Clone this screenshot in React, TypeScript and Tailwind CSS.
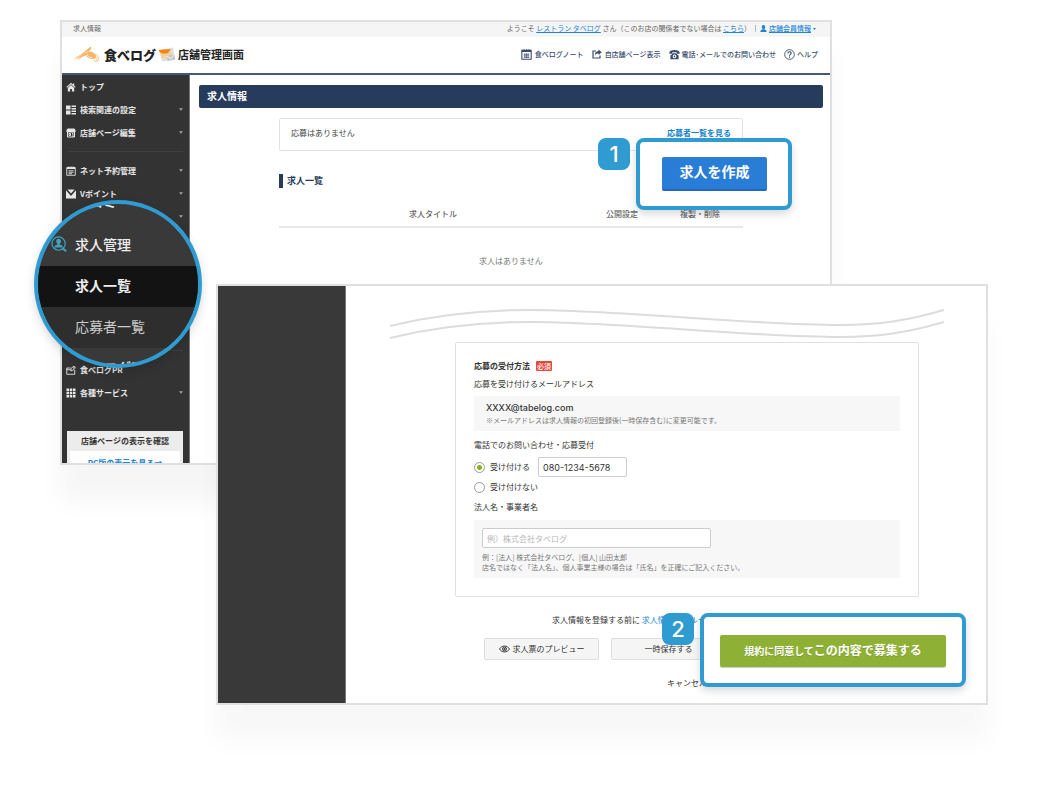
import type { ReactNode } from "react";

type IconProps = { className?: string };

// ---------- icons ----------

const HomeIcon = ({ className }: IconProps) => (
  <svg viewBox="0 0 20 20" className={className} fill="currentColor" aria-hidden="true">
    <path d="M10 1.5 0.8 9.8l1.5 1.7L10 4.6l7.7 6.9 1.5-1.7L16.5 7.3V3h-2.6v2z" />
    <path d="M10 6.2 3.6 12v6.8h4.6v-4.6h3.6v4.6h4.6V12z" />
  </svg>
);

const BlocksIcon = ({ className }: IconProps) => (
  <svg viewBox="0 0 20 20" className={className} fill="currentColor" aria-hidden="true">
    <path d="M0 1h9v8H0zM0 11h9v8H0zM11 1h9v3h-9zM11 6h9v3h-9zM11 11h9v3h-9zM11 16h9v3h-9z" />
  </svg>
);

const StoreIcon = ({ className }: IconProps) => (
  <svg viewBox="0 0 20 20" className={className} fill="none" stroke="currentColor" strokeWidth="2" aria-hidden="true">
    <path d="M3 2h14l1.5 5h-17z" fill="currentColor" />
    <path d="M3 8v10h14V8M2 8h16" />
    <path d="M6 11h3v4H6zM12 11h2v7" />
  </svg>
);

const CalendarIcon = ({ className }: IconProps) => (
  <svg viewBox="0 0 20 20" className={className} fill="none" stroke="currentColor" strokeWidth="1.8" aria-hidden="true">
    <path d="M1.5 3h17v15.5h-17z" />
    <path d="M2 5h16M5.5 1v4M10 1v4M14.5 1v4" strokeWidth="2.2" />
    <path d="M5 9.5h10M5 12.5h10M5 15.5h7" />
  </svg>
);

const PointIcon = ({ className }: IconProps) => (
  <svg viewBox="0 0 20 20" className={className} fill="currentColor" aria-hidden="true">
    <path d="M3 1h14l-7 8zM0 2.500l10 11.500L20 2.500V19H0z" />
  </svg>
);

const PrIcon = ({ className }: IconProps) => (
  <svg viewBox="0 0 20 20" className={className} fill="none" stroke="currentColor" strokeWidth="1.8" aria-hidden="true">
    <path d="M9 6H1.5v12.5h16V10M1.5 9.5h8" />
    <path d="M10 12V7l6-5v7zM18 3v4" />
  </svg>
);

const GridIcon = ({ className }: IconProps) => (
  <svg viewBox="0 0 20 20" className={className} fill="currentColor" aria-hidden="true">
    <path d="M1 1h5v5H1zM7.5 1h5v5h-5zM14 1h5v5h-5zM1 7.5h5v5H1zM7.5 7.5h5v5h-5zM14 7.5h5v5h-5zM1 14h5v5H1zM7.5 14h5v5h-5zM14 14h5v5h-5z" />
  </svg>
);

const ReviewIcon = ({ className }: IconProps) => (
  <svg viewBox="0 0 20 20" className={className} fill="none" stroke="currentColor" strokeWidth="2" aria-hidden="true">
    <path d="M2 16 13 4l4 4L6 18H2z" />
  </svg>
);

const NoteIcon = ({ className }: IconProps) => (
  <svg viewBox="0 0 20 20" className={className} fill="none" stroke="currentColor" strokeWidth="2" aria-hidden="true">
    <path d="M1.5 2.5h17v16h-17z" />
    <path d="M1.5 4.5h17M5.5 0.5v4M10 0.5v4M14.5 0.5v4" />
    <path d="M5 9.5h10M5 12.5h10M5 15.500h10M7 8v8M10 8v8M13 8v8" strokeWidth="1.2" />
  </svg>
);

const ShareIcon = ({ className }: IconProps) => (
  <svg viewBox="0 0 20 20" className={className} fill="none" stroke="currentColor" strokeWidth="2.400" aria-hidden="true">
    <path d="M8 4H2v14h14v-5" />
    <path d="M13 1l6.5 5.5L13 12V9c-4 0-6 1-7.500 4.500C5.500 7.500 8.500 4.500 13 4z" fill="currentColor" stroke="none" />
  </svg>
);

const TelIcon = ({ className }: IconProps) => (
  <svg viewBox="0 0 20 20" className={className} fill="currentColor" aria-hidden="true">
    <path d="M0.500 7.500C0.500 4 4 2 10 2s9.500 2 9.500 5.500v1h-5.200V6.300C12 5.700 8 5.700 5.700 6.300v2.200H0.500z" />
    <path fillRule="evenodd" d="M6.500 7.500h7l1 2.200 3 2.300v6.500h-15V12l3-2.300zM10 10.200a3.300 3.300 0 1 0 0 6.600 3.300 3.300 0 0 0 0-6.600zm0 1.800a1.500 1.500 0 1 1 0 3 1.500 1.500 0 0 1 0-3z" />
  </svg>
);

const HelpIcon = ({ className }: IconProps) => (
  <svg viewBox="0 0 20 20" className={className} fill="none" stroke="currentColor" strokeWidth="1.600" aria-hidden="true">
    <circle cx="10" cy="10" r="8.800" />
    <path d="M7 8c0-4 6-4 6-0.500 0 2-3 2.500-3 4.800M10 13.800v2" strokeWidth="2" />
  </svg>
);

const PersonIcon = ({ className }: IconProps) => (
  <svg viewBox="0 0 20 20" className={className} fill="currentColor" aria-hidden="true">
    <path d="M10 0c-3.500 0-5 2.500-5 5.500 0 2.800 1 4.500 2.500 5.500v2C4 13.600 1 14.500 1 20h18c0-5.500-3-6.400-6.500-7v-2C14 10 15 8.300 15 5.500 15 2.500 13.500 0 10 0z" />
  </svg>
);

const RecruitIcon = ({ className }: IconProps) => (
  <svg viewBox="0 0 20 20" className={className} fill="none" stroke="currentColor" aria-hidden="true">
    <circle cx="9.500" cy="9.500" r="8.300" strokeWidth="1.500" />
    <path d="m14.500 15.500 4.500 3.500" strokeWidth="2.500" />
    <path
      d="M9.500 3.500c-2 0-3 1.400-3 3.200 0 1.400.6 2.400 1.500 3v1.100c-2 .4-4 1-4 3.700h11c0-2.700-2-3.300-4-3.700V9.700c.9-.6 1.500-1.600 1.500-3 0-1.800-1-3.200-3-3.200z"
      fill="currentColor"
      stroke="none"
    />
  </svg>
);

const EyeIcon = ({ className }: IconProps) => (
  <svg viewBox="0 0 22 16" className={className} fill="none" stroke="currentColor" strokeWidth="1.800" aria-hidden="true">
    <path d="M1 8c5-8 15-8 20 0-5 8-15 8-20 0z" />
    <circle cx="11" cy="8" r="4" />
    <circle cx="11" cy="8" r="1.500" fill="currentColor" />
  </svg>
);

const HandLogo = ({ className }: IconProps) => (
  <svg viewBox="0 0 54 34" className={className} fill="none" aria-hidden="true">
    <path
      d="M0 26 16 17 33 3c3-2 5 0 3 3l-5 5c6 0 11 2 14 6l2 6-6 3-8-1c-4-1-6-4-6-7l-8 4-9 6 4-5-9 4 4-4z"
      fill="#f8b465"
    />
    <path d="M6 25l11-6M13 26l9-6M22 15l9-4" stroke="#fff" strokeWidth="1" />
    <path d="M29 17c0 4 4 7 9 6" stroke="#fff" strokeWidth="1.500" />
    <path d="M45 16c4 2 5 5 5 8l2 3-7 5-3-4" stroke="#f7b867" strokeWidth="1.800" />
    <path d="M45 22l3 7" stroke="#f7b867" strokeWidth="1.500" />
  </svg>
);

const EnvelopeLogo = ({ className }: IconProps) => (
  <svg viewBox="0 0 36 30" className={className} aria-hidden="true">
    <path d="M3 6 30 1l4 24-26 4z" fill="#dedede" />
    <path d="M1 6 25 4l3 14-20 4z" fill="#f9cf8d" />
    <path d="M1 6c3 6 9 8 13 7 5 1 9-3 11-9z" fill="#f08519" />
    <path d="M16 18l17-3 2 10-16 3z" fill="#c6cacd" />
    <path d="m16 18 10 5 7-8" stroke="#fff" strokeWidth="1.500" fill="none" />
  </svg>
);

const Caret = ({ className }: IconProps) => (
  <svg viewBox="0 0 8 5" className={className} fill="currentColor" aria-hidden="true">
    <path d="M0 0h8L4 5z" />
  </svg>
);

// ---------- shared parts ----------

function StepBadge({ children }: { children: ReactNode }) {
  return (
    <span className="flex size-8 items-center justify-center rounded-lg bg-[#2f9bd0] font-['Inter',sans-serif] text-[22px] leading-none font-medium text-white">
      {children}
    </span>
  );
}

function Callout({ step, children }: { step: number; children: ReactNode }) {
  return (
    <div className="flex items-start gap-1.5">
      <StepBadge>{step}</StepBadge>
      <div className="rounded-lg border-4 border-[#2f9bd0] bg-white shadow-[0_4px_8px_rgba(0,0,0,0.15)]">{children}</div>
    </div>
  );
}

type MenuItemProps = { icon: ReactNode; label: string; caret?: boolean };

function MenuItem({ icon, label, caret = true }: MenuItemProps) {
  return (
    <li>
      <a href="#" className="flex h-[23px] items-center gap-1 pr-1.5 pl-1 text-[8px] leading-none font-bold text-[#e6e6e6]">
        <span className="size-[10px]">{icon}</span>
        <span className="flex-1">{label}</span>
        {caret && <Caret className="h-[3px] w-1 text-[#a5a5a5]" />}
      </a>
    </li>
  );
}

// ---------- admin window ----------

function Sidebar() {
  return (
    <nav className="w-32 shrink-0 border-r border-[#777] bg-[#333]" aria-label="メニュー">
      <ul>
        <MenuItem icon={<HomeIcon />} label="トップ" caret={false} />
        <MenuItem icon={<BlocksIcon />} label="検索関連の設定" />
        <MenuItem icon={<StoreIcon />} label="店舗ページ編集" />
      </ul>
      <hr className="mx-1.5 my-[7px] border-[#3f3f3f]" />
      <ul className="h-[184px]">
        <MenuItem icon={<CalendarIcon />} label="ネット予約管理" />
        <MenuItem icon={<PointIcon />} label="Vポイント" />
        <MenuItem icon={<ReviewIcon />} label="" />
      </ul>
      <hr className="mx-1.5 my-[7px] border-[#3f3f3f]" />
      <ul>
        <MenuItem icon={<PrIcon />} label="食べログPR" caret={false} />
        <MenuItem icon={<GridIcon />} label="各種サービス" />
      </ul>
      <div className="mr-1.5 ml-[5px] mt-[27px] bg-[#ececec] px-[3px] text-center text-[8px] leading-5 font-bold">
        <p className="text-[#333]">店舗ページの表示を確認</p>
        <a href="#" className="block bg-white pt-0.5 leading-5 text-[#1c86d1]">
          PC版の表示を見る→
        </a>
      </div>
    </nav>
  );
}

function AdminHeader() {
  return (
    <header className="border-b-2 border-[#44587a]">
      <div className="flex h-[15px] items-center justify-between bg-[#f5f5f5] pr-3.5 pb-0.5 pl-[11px] text-[7px] leading-none text-[#666]">
        <span>求人情報</span>
        <div className="flex items-center">
          <p>
            ようこそ{" "}
            <a href="#" className="text-[#1c86d1] underline">レストラン タベログ</a>{" "}
            さん（このお店の関係者でない場合は{" "}
            <a href="#" className="text-[#1c86d1] underline">こちら</a>）
          </p>
          <a href="#" className="ml-1 flex items-center gap-0.5 border-l border-[#bbb] pl-1 font-medium text-[#1c86d1]">
            <PersonIcon className="size-[7px]" />
            <span className="underline">店舗会員情報</span>
            <Caret className="h-0.5 w-[3px]" />
          </a>
        </div>
      </div>
      <div className="flex h-9 items-center justify-between pr-3 pb-0.5 pl-[11px]">
        <div className="flex items-center text-[#222]">
          <HandLogo className="mr-1 h-[17px] w-[27px]" />
          <span className="text-[13px] leading-none font-black">食べログ</span>
          <EnvelopeLogo className="mr-0.5 ml-0.5 h-[15px] w-[18px]" />
          <span className="text-[11px] leading-none font-bold">店舗管理画面</span>
        </div>
        <ul className="flex items-center gap-2 text-[7px] leading-none font-medium text-[#3a4d6e]">
          <li>
            <a href="#" className="flex items-center gap-[3px]"><NoteIcon className="size-[11px]" />食べログノート</a>
          </li>
          <li>
            <a href="#" className="flex items-center gap-[3px]"><ShareIcon className="size-[10px]" />自店舗ページ表示</a>
          </li>
          <li>
            <a href="#" className="flex items-center gap-0.5"><TelIcon className="size-[11px]" />電話･メールでのお問い合わせ</a>
          </li>
          <li>
            <a href="#" className="flex items-center gap-0.5"><HelpIcon className="size-[11px]" />ヘルプ</a>
          </li>
        </ul>
      </div>
    </header>
  );
}

function AdminWindow() {
  return (
    <section className="max-h-[445px] overflow-hidden border-2 border-[#e0e0e0] bg-white shadow-[0_36px_24px_rgba(0,0,0,0.04)]">
      <AdminHeader />
      <div className="flex">
        <Sidebar />
        <main className="flex-1 pt-[10px] pr-[7px] pl-[9px]">
          <h1 className="rounded-xs bg-[#273b5c] px-2 pb-0.5 text-[10px] leading-[21px] font-bold text-white">求人情報</h1>
          <div className="mx-20 mt-[10px]">
            <div className="flex h-[33px] items-center justify-between rounded-xs border border-[#e2e2e2] px-[11px] pb-1 text-[8px] text-[#444]">
              <p>応募はありません</p>
              <a href="#" className="font-bold text-[#1583cc]">応募者一覧を見る</a>
            </div>
            <h2 className="mt-[23px] border-l-4 border-[#273b5c] pl-1 text-[9px] leading-[14px] font-bold text-[#273b5c]">
              求人一覧
            </h2>
            <table className="mt-[13px] w-full table-fixed text-center text-[8px] leading-none">
              <thead className="border-b-2 border-[#e8e8e8] text-[#666]">
                <tr className="h-[26px]">
                  <th className="font-medium">求人タイトル</th>
                  <th className="w-[70px] font-medium">公開設定</th>
                  <th className="w-[86px] font-medium">複製・削除</th>
                </tr>
              </thead>
              <tbody>
                <tr className="h-[66px]">
                  <td colSpan={3} className="text-[#777]">求人はありません</td>
                </tr>
              </tbody>
            </table>
          </div>
        </main>
      </div>
    </section>
  );
}

// enlarged part of the side menu
function MenuLens() {
  return (
    <div className="size-[168px] overflow-hidden rounded-full border-4 border-[#2f9bd0] bg-[#393939] text-sm leading-none text-[#eee] shadow-[0_4px_10px_rgba(0,0,0,0.15)]">
      <ul className="-mt-5">
        <li className="flex h-[41px] items-center pb-2 pl-[37px] font-medium">口コミ</li>
        <li className="flex h-[41px] items-center gap-2 pb-1 pl-[13px] font-medium">
          <RecruitIcon className="size-4 text-[#3fa3c0]" />
          求人管理
        </li>
        <li className="flex h-[41px] items-center bg-[#131313] pb-1 pl-[37px] font-bold">求人一覧</li>
        <li className="flex h-[41px] items-center bg-[#2e2e2e] pb-1 pl-[37px] text-[#ccc]">応募者一覧</li>
        <li className="flex h-[41px] items-center pb-1 pl-[37px] font-medium">食べログPR</li>
      </ul>
    </div>
  );
}

// ---------- form window ----------

function Waves() {
  return (
    <svg viewBox="0 0 554 32" className="mx-11 mt-[22px] block h-8" preserveAspectRatio="none" fill="none" stroke="#dcdcdc" strokeWidth="2" aria-hidden="true">
      <path d="M0 18C45 7 90 2 140 2c90 0 220 15 310 15 40 0 70-5 104-15" />
      <path d="M0 30C45 19 90 14 140 14c90 0 220 15 310 15 40 0 70-5 104-15" />
    </svg>
  );
}

const radioClass =
  "size-[11px] appearance-none rounded-full border border-[#999] bg-white checked:bg-[radial-gradient(circle,#86b01e_2px,#fff_3px)]";

function EntryForm() {
  return (
    <div className="mt-[2px] mr-[69px] ml-[109px] rounded-xs border border-[#e0e0e0] px-[18px] pt-4 pb-[18px] text-[8px] leading-4 text-[#333]">
      <h2 className="flex items-center gap-1.5 leading-[14px] font-bold">
        応募の受付方法
        <span className="rounded-[1px] bg-[#e8463a] px-px text-[7px] leading-[10px] font-medium text-white">必須</span>
      </h2>
      <p className="mt-[3px]">応募を受け付けるメールアドレス</p>
      <div className="mt-1 bg-[#f7f7f7] px-3 py-[5px]">
        <p className="font-['Inter',sans-serif] text-[9px] leading-[13px] font-medium">XXXX@tabelog.com</p>
        <p className="text-[7px] leading-3 text-[#777]">
          ※メールアドレスは求人情報の初回登録後(一時保存含む)に変更可能です。
        </p>
      </div>
      <fieldset className="pt-1">
        <legend className="pt-1.5">電話でのお問い合わせ・応募受付</legend>
        <div className="flex h-5 items-center">
          <input type="radio" id="tel-yes" name="tel" defaultChecked className={radioClass} />
          <label htmlFor="tel-yes" className="ml-[5px]">受け付ける</label>
          <input
            type="tel"
            aria-label="電話番号"
            defaultValue="080-1234-5678"
            className="ml-2 h-5 w-[89px] rounded-xs border border-[#ccc] bg-white px-1 font-['Inter',sans-serif] text-[9px]"
          />
        </div>
        <div className="flex h-5 items-center">
          <input type="radio" id="tel-no" name="tel" className={radioClass} />
          <label htmlFor="tel-no" className="ml-[5px]">受け付けない</label>
        </div>
      </fieldset>
      <label htmlFor="company" className="mt-0.5 block">法人名・事業者名</label>
      <div className="mt-[5px] bg-[#f7f7f7] px-2 pt-2 pb-[6px]">
        <input
          type="text"
          id="company"
          placeholder="例）株式会社タベログ"
          className="block h-5 w-[229px] rounded-xs border border-[#ccc] bg-white px-1 text-[8px] placeholder:text-[#b5b5b5]"
        />
        <p className="mt-1 text-[7px] leading-[10px] text-[#777]">
          例：[法人] 株式会社タベログ、[個人] 山田太郎
          <br />
          店名ではなく「法人名」、個人事業主様の場合は「氏名」を正確にご記入ください。
        </p>
      </div>
    </div>
  );
}

function FormWindow() {
  const subButton =
    "flex h-[22px] w-[115px] items-center justify-center gap-[3px] rounded-xs border border-[#ddd] bg-[#f5f5f5]";

  return (
    <section className="relative flex border-2 border-[#e0e0e0] bg-white shadow-[0_36px_24px_rgba(0,0,0,0.03)]">
      <div className="w-32 shrink-0 border-r border-[#777] bg-[#393939]" />
      <div className="flex-1 pb-3">
        <Waves />
        <EntryForm />
        <div className="mr-[69px] ml-[109px] pt-[15px] text-[8px] leading-4 text-[#333]">
          <p className="pl-[97px]">
            求人情報を登録する前に <a href="#" className="text-[#1c86d1]">求人情報掲載ルール</a>
          </p>
          <div className="mt-[10px] flex gap-3 pl-[29px]">
            <button type="button" className={subButton}>
              <EyeIcon className="h-2 w-[11px]" />
              求人票のプレビュー
            </button>
            <button type="button" className={subButton}>一時保存する</button>
          </div>
          <div className="mt-[15px] text-center">
            <a href="#">キャンセル</a>
          </div>
        </div>
      </div>
      <div className="absolute right-5 bottom-4">
        <Callout step={2}>
          <div className="px-4 pt-[18px] pb-4">
            <button
              type="button"
              className="block h-8 w-[226px] rounded-xs bg-[#8eb135] pb-0.5 text-[10px] leading-none font-bold text-white shadow-[0_1px_1px_rgba(0,0,0,0.2)] text-shadow-2xs"
            >
              規約に同意して<span className="text-xs">この内容で募集する</span>
            </button>
          </div>
        </Callout>
      </div>
    </section>
  );
}

export default function App() {
  return (
    <div lang="ja" className="overflow-hidden bg-white pt-5 pb-[100px] font-['Noto_Sans_CJK_JP',sans-serif]">
      <div className="relative mr-54 ml-15">
        <AdminWindow />
        <div className="absolute top-[118px] right-10">
          <Callout step={1}>
            <div className="py-[15px] pr-[21px] pl-[22px]">
              <button
                type="button"
                className="block h-[34px] w-[105px] rounded-xs border-b-2 border-[#2068bd] bg-[#2a7dd7] pb-1 text-sm leading-none font-bold text-white"
              >
                求人を作成
              </button>
            </div>
          </Callout>
        </div>
        <div className="absolute top-[180px] -left-[26px]">
          <MenuLens />
        </div>
      </div>
      <div className="relative -mt-[181px] mr-15 ml-54">
        <FormWindow />
      </div>
    </div>
  );
}
